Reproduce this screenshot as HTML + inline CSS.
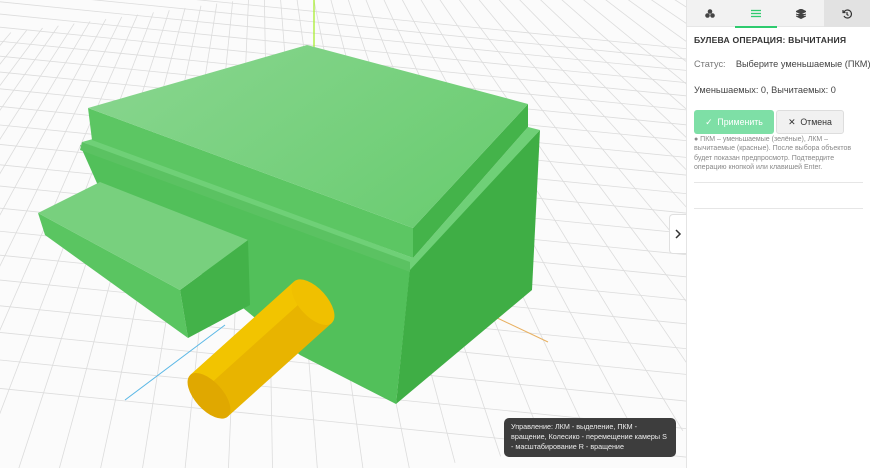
<!DOCTYPE html>
<html><head><meta charset="utf-8"><style>
*{margin:0;padding:0;box-sizing:border-box}
html,body{width:870px;height:468px;overflow:hidden}
body{background:#fff;font-family:"Liberation Sans",sans-serif;position:relative}
#vp{position:absolute;left:0;top:0;width:686px;height:468px;background:#fbfbfb;overflow:hidden}
#panel{position:absolute;left:686px;top:0;width:184px;height:468px;background:#fff;border-left:1px solid #e4e4e4;overflow:hidden}
.tabs{height:27px;background:#f2f2f2;display:flex;border-bottom:1px solid #e6e6e6}
.tab{width:46px;height:27px;display:flex;align-items:center;justify-content:center;position:relative}
.tab.act:after{content:"";position:absolute;left:2px;right:2px;bottom:-1px;height:2px;background:#2fcb6f}
.tab.hist{background:#e2e2e2}
h1{font-size:8.6px;font-weight:bold;color:#333;margin:8px 0 0 7px;letter-spacing:.2px}
.row{font-size:9.2px;color:#444;position:absolute;left:7px;white-space:nowrap}
.btn{position:absolute;top:110px;height:24px;border-radius:3px;font-size:8.8px;display:flex;align-items:center;justify-content:center}
.hint{position:absolute;left:7px;top:135px;width:160px;font-size:7px;line-height:9.3px;color:#888}
.hr{position:absolute;left:7px;right:7px;height:1px;background:#e6e6e6}
#tip{position:absolute;left:504px;top:418px;width:172px;height:39px;background:#3d3d3d;border-radius:5px;color:#eee;font-size:7.2px;line-height:10px;padding:4px 7px;overflow:hidden}
#arrow{position:absolute;left:669px;top:214px;width:17px;height:40px;background:#fff;border:1px solid #e0e0e0;border-right:none;border-radius:4px 0 0 4px;display:flex;align-items:center;justify-content:center}
</style></head><body>
<div id="vp"><svg id="s" width="686" height="468" viewBox="0 0 686 468" style="display:block">
<g id="grid" stroke="#dcdcdc" stroke-width="0.8"></g>
<line x1="125" y1="400" x2="225" y2="325" stroke="#5bb8e6" stroke-width="1"/>
<line x1="455" y1="298" x2="548" y2="342" stroke="#e8b060" stroke-width="1"/>
<line x1="314" y1="0" x2="314" y2="106" stroke="#a8ee30" stroke-width="1.3"/>
<polygon points="80,145 410,270 396,404 300,355 100,190" fill="#52c05a"/>
<polygon points="410,268 540,130 532,290 396,404" fill="#3fae45"/>
<polygon points="82,142 93,139 413,258 528,127 540,130 410,270" fill="#6fd077"/>
<polygon points="82,142 410,262 410,272 80,150" fill="#5bc262"/>
<polygon points="88,108 413,228 413,258 92,140" fill="#5cc663"/>
<polygon points="413,228 528,104 528,127 413,258" fill="#44b34a"/>
<defs><linearGradient id="g1" x1="0" y1="0" x2="1" y2="0.6"><stop offset="0" stop-color="#8ad690"/><stop offset="1" stop-color="#6ccd73"/></linearGradient></defs>
<polygon points="88,108 307,45 528,104 413,228" fill="url(#g1)"/>
<polygon points="38,213 180,290 188,338 45,235" fill="#5ac561"/>
<polygon points="180,290 248,240 250,305 188,338" fill="#43b249"/>
<polygon points="38,213 100,182 248,240 180,290" fill="#78d07e"/>
<g transform="translate(261,349) rotate(-42)">
<rect x="-70" y="-28" width="140" height="56" fill="#e8b400"/>
<rect x="-70" y="-28" width="140" height="20" fill="#f2c400"/>
<ellipse cx="70" cy="0" rx="14" ry="28" fill="#f0c000"/>
<ellipse cx="-70" cy="0" rx="14" ry="28" fill="#e0a800"/>
</g>
</svg>
<div id="arrow"><svg width="8" height="10"><path d="M2 1 L6 5 L2 9" stroke="#333" stroke-width="1.5" fill="none"/></svg></div>
<div id="tip">Управление: ЛКМ - выделение, ПКМ - вращение, Колесико - перемещение камеры S - масштабирование R - вращение</div>
</div>
<div id="panel">
<div class="tabs">
<div class="tab"><svg width="10" height="9"><circle cx="5" cy="2.5" r="2.3" fill="#444"/><circle cx="2.5" cy="6.5" r="2.3" fill="#444"/><circle cx="7.5" cy="6.5" r="2.3" fill="#444"/></svg></div>
<div class="tab act"><svg width="10" height="9" stroke="#2fcb6f" stroke-width="1.3"><line x1="0" y1="1.5" x2="10" y2="1.5"/><line x1="0" y1="4.5" x2="10" y2="4.5"/><line x1="0" y1="7.5" x2="10" y2="7.5"/></svg></div>
<div class="tab"><svg width="10" height="10"><path d="M5 0 L10 2.5 L5 5 L0 2.5Z M0 5 L5 7.5 L10 5 M0 7 L5 9.5 L10 7" fill="#444" stroke="#444"/></svg></div>
<div class="tab hist"><svg width="10" height="10"><path d="M2 3 A4 4 0 1 1 2 7 M1 1 V3.5 H3.5 M5 3 V5.5 L6.5 6.5" stroke="#333" stroke-width="1.2" fill="none"/></svg></div>
</div>
<h1>БУЛЕВА ОПЕРАЦИЯ: ВЫЧИТАНИЯ</h1>
<div class="row" style="top:59px"><span style="color:#777">Статус:</span>&nbsp;&nbsp;&nbsp;&nbsp;Выберите уменьшаемые (ПКМ)</div>
<div class="row" style="top:85px">Уменьшаемых: 0, Вычитаемых: 0</div>
<div class="btn" style="left:7px;width:80px;background:#7edfa6;color:#fff">✓&nbsp; Применить</div>
<div class="btn" style="left:89px;width:68px;background:#f1f1f1;border:1px solid #ddd;color:#333">✕&nbsp; Отмена</div>
<div class="hint">● ПКМ – уменьшаемые (зелёные), ЛКМ – вычитаемые (красные). После выбора объектов будет показан предпросмотр. Подтвердите операцию кнопкой или клавишей Enter.</div>
<div class="hr" style="top:182px"></div>
<div class="hr" style="top:208px"></div>
</div>
<script>
var g=document.getElementById('grid'),h='';
for(var i=-25;i<=25;i++){var x0=330+i*16,x1=330+i*46;h+='<line x1="'+x0+'" y1="-10" x2="'+x1+'" y2="478" transform="rotate(-8 330 234)"/>';}
for(var j=0;j<22;j++){var y=j*j*0.45+j*10;h+='<line x1="-200" y1="'+(y-40)+'" x2="900" y2="'+(y+70)+'"/>';}
g.innerHTML=h;
</script>
</body></html>
